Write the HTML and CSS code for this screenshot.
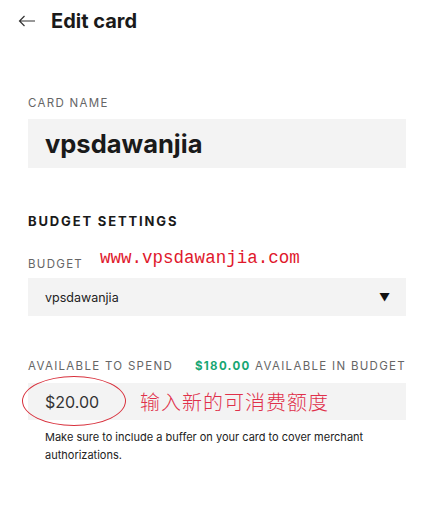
FILE: index.html
```html
<!DOCTYPE html>
<html>
<head>
<meta charset="utf-8">
<link rel="stylesheet" href="styles.css">
</head>
<body>
<header class="topbar">
  <svg class="back" width="18" height="12" viewBox="0 0 18 12"><path d="M17 6H1.5M6.5 1L1.5 6l5 5" fill="none" stroke="#333" stroke-width="1.2"/></svg>
  <h1 class="title">Edit card</h1>
</header>
<main class="content">
  <div class="label label-card">CARD NAME</div>
  <div class="name-box">vpsdawanjia</div>

  <h2 class="section">BUDGET SETTINGS</h2>

  <div class="budget-row">
    <span class="label">BUDGET</span>
    <span class="watermark">www.vpsdawanjia.com</span>
  </div>
  <div class="select-box">
    <span>vpsdawanjia</span>
    <span class="caret">&#9660;</span>
  </div>

  <div class="avail-row">
    <span class="label">AVAILABLE TO SPEND</span>
    <span class="label"><b class="green">$180.00</b> AVAILABLE IN BUDGET</span>
  </div>
  <div class="amount-box">
    <span class="amount">$20.00</span>
    <span class="note">输入新的可消费额度</span>
    <span class="ring"></span>
  </div>
  <p class="help">Make sure to include a buffer on your card to cover merchant authorizations.</p>
</main>
</body>
</html>
```
FILE: styles.css
```css
body {
  margin: 0;
  background: #fff;
  font-family: Inter, "Noto Sans", sans-serif;
  color: #1a1a1a;
}
.topbar {
  display: flex;
  align-items: center;
  gap: 15px;
  padding: 9px 0 0 18px;
  height: 24px;
}
.back { display: block; }
.title {
  margin: 0;
  font-size: 20px;
  font-weight: 700;
  letter-spacing: 0;
}
.content {
  padding: 64px 28px 0 28px;
}
.label {
  font-size: 11.5px;
  letter-spacing: 1.3px;
  color: #666;
}
.label-card { line-height: 13px; }
.name-box {
  margin-top: 9px;
  background: #f3f3f3;
  height: 49px;
  display: flex;
  align-items: center;
  padding-left: 17px;
  font-size: 25.5px;
  font-weight: 700;
  color: #1a1a1a;
}
.section {
  margin: 45px 0 0 0;
  font-size: 13px;
  font-weight: 700;
  letter-spacing: 1.85px;
  color: #1a1a1a;
  line-height: 16px;
}
.budget-row {
  display: flex;
  align-items: flex-end;
  gap: 17px;
  margin-top: 22px;
  height: 20px;
}
.watermark {
  font-family: "Liberation Mono", monospace;
  font-size: 17.5px;
  color: #e0182c;
  line-height: 20px;
  position: relative;
  top: -3px;
}
.select-box {
  margin-top: 7px;
  background: #f3f3f3;
  height: 38px;
  display: flex;
  align-items: center;
  justify-content: space-between;
  padding: 0 16px 0 17px;
  font-size: 12.5px;
  color: #222;
}
.caret { font-size: 11px; color: #111; }
.avail-row {
  display: flex;
  justify-content: space-between;
  margin-top: 43px;
  line-height: 14px;
}
.green { color: #17a673; font-weight: 700; }
.amount-box {
  position: relative;
  margin-top: 10px;
  background: #f3f3f3;
  height: 37px;
  display: flex;
  align-items: center;
  padding-left: 17px;
}
.amount {
  font-size: 16px;
  color: #333;
  width: 95px;
}
.note {
  font-family: "Noto Sans CJK SC", sans-serif;
  font-size: 20px;
  color: #e0304a;
  letter-spacing: 1px;
  font-weight: 300;
}
.ring {
  position: absolute;
  left: -6px;
  top: -7px;
  width: 102px;
  height: 48px;
  border: 1px solid #d8303c;
  border-radius: 50%;
}
.help {
  margin: 8px 0 0 17px;
  font-size: 11px;
  line-height: 18px;
  color: #222;
}
```
